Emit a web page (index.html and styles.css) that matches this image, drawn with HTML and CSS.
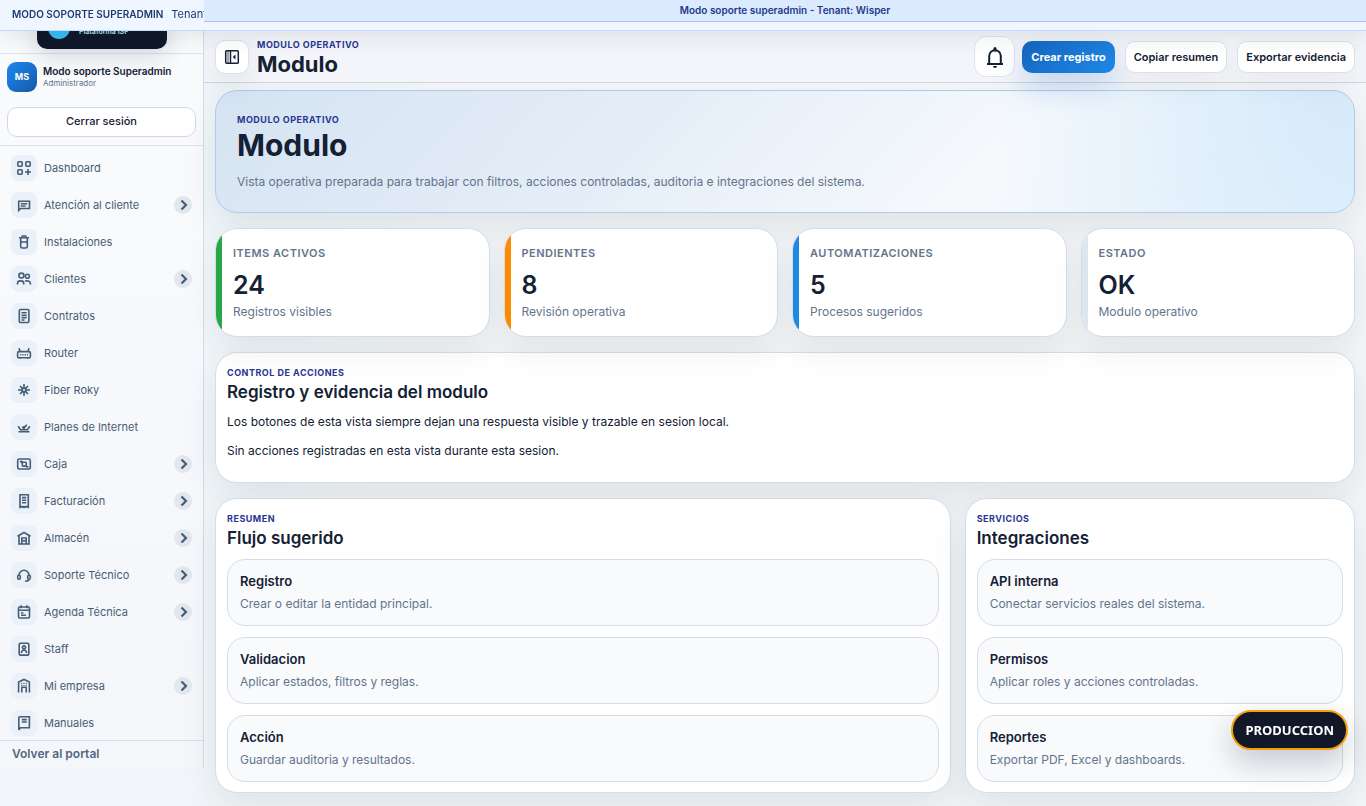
FILE: index.html
```html
<!DOCTYPE html>
<html lang="es">
<head>
<meta charset="utf-8">
<meta name="viewport" content="width=device-width, initial-scale=1">
<title>Modulo</title>
<link rel="stylesheet" href="styles.css">
</head>
<body>
<div class="support-bar"><strong>MODO SOPORTE SUPERADMIN</strong><span>Tenant: Wisper</span></div>
<div class="tenant-bar">Modo soporte superadmin - Tenant: Wisper</div>
<div class="app">
  <aside class="sidebar">
    <div class="brand">
      <div class="brand-card">
        <svg class="brand-mark" viewBox="0 0 22 22"><circle cx="11" cy="11" r="11" fill="#38bdf8" stroke="none"/><path d="M7 10a5 5 0 0 0 8 0" fill="none" stroke="#0f172a" stroke-width="2"/></svg>
        <span>Plataforma ISP</span>
      </div>
    </div>
    <div class="account">
      <div class="user">
        <span class="avatar">MS</span>
        <div class="user-text"><strong>Modo soporte Superadmin</strong><span>Administrador</span></div>
      </div>
      <button class="logout" type="button">Cerrar sesión</button>
    </div>
    <nav class="nav">
      <a href="#"><span class="tile"><svg viewBox="0 0 16 16"><rect x="1.8" y="1.8" width="4.4" height="4.4" rx="1"/><rect x="9.8" y="1.8" width="4.4" height="4.4" rx="1"/><rect x="1.8" y="9.8" width="4.4" height="4.4" rx="1"/><path d="M12 9v6M9 12h6"/></svg></span>Dashboard</a>
      <a href="#"><span class="tile"><svg viewBox="0 0 16 16"><path d="M2.700 13.500V4.200h10.800v7.300h-9z"/><path d="M4.800 6.700h6.600M4.800 9h4.800"/></svg></span>Atención al cliente<i class="chev"><svg viewBox="0 0 18 18"><path d="M7.5 4.500l4.500 4.500-4.500 4.500"/></svg></i></a>
      <a href="#"><span class="tile"><svg viewBox="0 0 16 16"><path d="M3 3.700h10M6.300 3.500V2h3.400v1.500M4.700 4v8.500q0 1.500 1.500 1.500h3.600q1.500 0 1.500-1.500V4M4.700 8h6.600"/></svg></span>Instalaciones</a>
      <a href="#"><span class="tile"><svg viewBox="0 0 16 16"><circle cx="5.4" cy="4.6" r="2.5"/><circle cx="11.4" cy="5.2" r="2"/><path d="M1.500 13.500v-1a2.600 2.600 0 0 1 2.600-2.600h1a2.600 2.600 0 0 1 2.600 2.600v1M9 10.200q.8-.5 2.300-.5 3.200.2 3.200 3.800"/></svg></span>Clientes<i class="chev"><svg viewBox="0 0 18 18"><path d="M7.5 4.500l4.500 4.500-4.500 4.500"/></svg></i></a>
      <a href="#"><span class="tile"><svg viewBox="0 0 16 16"><rect x="3.300" y="1.500" width="9.600" height="13" rx="1.200"/><path d="M5.500 4.800h5.200M5.500 7.200h5.200M5.500 9.600h5.200M5.500 12h3"/></svg></span>Contratos</a>
      <a href="#"><span class="tile"><svg viewBox="0 0 16 16"><rect x="1.600" y="6.600" width="12.800" height="6.200" rx="1.400"/><path d="M4 6.400L3 3.200M12 6.400l1-3.200M4.400 12.800v1M11.600 12.800v1"/><path d="M4 9.700h8" stroke-dasharray="1.300 1"/></svg></span>Router</a>
      <a href="#"><span class="tile"><svg viewBox="0 0 16 16"><circle cx="8" cy="8" r="1.900"/><path d="M8 2v4M8 10v4M2 8h4M10 8h4M4 4l2.600 2.600M12 4L9.400 6.600M4 12l2.600-2.600M12 12L9.400 9.400"/></svg></span>Fiber Roky</a>
      <a href="#"><span class="tile"><svg viewBox="0 0 16 16"><path d="M2.500 12.800h11M2.200 7.300L4.500 10.800h7L13.800 7.300M7 10.600l3.800-4.800M6 8.600l3.500-1.300"/></svg></span>Planes de Internet</a>
      <a href="#"><span class="tile"><svg viewBox="0 0 16 16"><rect x="1.700" y="3" width="12.600" height="10" rx="1.500"/><rect x="6.300" y="6.300" width="4" height="3.800" rx=".8"/><path d="M3.800 5.500h3M4.500 5.500l2 2M10 10l1.800 1.300M10.500 10.800h2"/></svg></span>Caja<i class="chev"><svg viewBox="0 0 18 18"><path d="M7.5 4.500l4.500 4.500-4.500 4.500"/></svg></i></a>
      <a href="#"><span class="tile"><svg viewBox="0 0 16 16"><path d="M4 14.300V1.700h8.300v12.600l-1.700-.8-1.300.8-1.200-.8-1.300.8-1.300-.8z"/><path d="M6 4.600h4.200M6 7.200h4.200M6 9.800h4.200"/></svg></span>Facturación<i class="chev"><svg viewBox="0 0 18 18"><path d="M7.5 4.500l4.500 4.500-4.500 4.500"/></svg></i></a>
      <a href="#"><span class="tile"><svg viewBox="0 0 16 16"><path d="M1.500 6.200L8 2.500l6.500 3.700M3 5.800V14h10V5.800"/><path d="M5.800 14V8h4.400v6M5.800 10.800h4.400"/></svg></span>Almacén<i class="chev"><svg viewBox="0 0 18 18"><path d="M7.5 4.500l4.500 4.500-4.500 4.500"/></svg></i></a>
      <a href="#"><span class="tile"><svg viewBox="0 0 16 16"><path d="M3 8.500a5 5.300 0 0 1 10 0"/><rect x="1.700" y="8.300" width="2.600" height="4" rx="1.200"/><rect x="11.700" y="8.300" width="2.600" height="4" rx="1.200"/><path d="M13.200 12.300q-.5 1.900-4.200 1.900"/></svg></span>Soporte Técnico<i class="chev"><svg viewBox="0 0 18 18"><path d="M7.5 4.500l4.500 4.500-4.500 4.500"/></svg></i></a>
      <a href="#"><span class="tile"><svg viewBox="0 0 16 16"><rect x="2.500" y="3" width="11" height="11" rx="1.200"/><path d="M2.500 6.300h11M5 1.300v3M11 1.300v3M5 9h2.400M5 11.200h5"/></svg></span>Agenda Técnica<i class="chev"><svg viewBox="0 0 18 18"><path d="M7.5 4.500l4.500 4.500-4.500 4.500"/></svg></i></a>
      <a href="#"><span class="tile"><svg viewBox="0 0 16 16"><rect x="3.200" y="2.300" width="9.600" height="11.800" rx="1.200"/><circle cx="8" cy="6.300" r="1.600"/><path d="M5.400 12q.3-3 2.600-3t2.600 3"/></svg></span>Staff</a>
      <a href="#"><span class="tile"><svg viewBox="0 0 16 16"><path d="M2.600 14.500V4L8 1.500 13.400 4v10.500"/><path d="M5.800 14.500V9.300h4.400v5.200"/><path d="M5 5.300h6.200M5 7.300h6.200" stroke-dasharray="1.300 1" stroke-width="1"/></svg></span>Mi empresa<i class="chev"><svg viewBox="0 0 18 18"><path d="M7.5 4.500l4.500 4.500-4.500 4.500"/></svg></i></a>
      <a href="#"><span class="tile"><svg viewBox="0 0 16 16"><path d="M2.800 15V2.800q0-1.100 1.100-1.100h9.500v11H4.300L2.800 15"/><path d="M5.800 4.600h5M5.800 7h5"/></svg></span>Manuales</a>
    </nav>
    <a class="back" href="#">Volver al portal</a>
  </aside>
  <div class="page">
    <header class="topbar">
      <button class="toggle" type="button" aria-label="Contraer menú"><svg viewBox="0 0 16 16"><rect x="1.700" y="1.700" width="12.600" height="12.600" rx="1"/><path d="M6.500 2v12"/><path d="M4 2v12" stroke-width=".8"/><path d="M11.500 5.500v5L8.700 8z" fill="currentColor" stroke="none"/></svg></button>
      <div class="titles"><p class="eyebrow">MODULO OPERATIVO</p><h1>Modulo</h1></div>
      <div class="actions">
        <button class="bell" type="button" aria-label="Notificaciones"><svg viewBox="0 0 24 24"><path d="M4 19h16M6.200 19v-8a5.800 5.800 0 0 1 11.600 0v8"/><path d="M12 3.500v1.500" stroke-width="3" stroke-linecap="round"/><path d="M10 21h4a2 2 0 0 1-4 0z" fill="currentColor" stroke="none"/></svg></button>
        <button class="btn primary" type="button">Crear registro</button>
        <button class="btn" type="button">Copiar resumen</button>
        <button class="btn" type="button">Exportar evidencia</button>
      </div>
    </header>
    <main class="content">
      <section class="hero">
        <p class="eyebrow">MODULO OPERATIVO</p>
        <h2>Modulo</h2>
        <p class="lead">Vista operativa preparada para trabajar con filtros, acciones controladas, auditoria e integraciones del sistema.</p>
      </section>
      <section class="stats">
        <article class="stat green"><h3>ITEMS ACTIVOS</h3><strong>24</strong><p>Registros visibles</p></article>
        <article class="stat orange"><h3>PENDIENTES</h3><strong>8</strong><p>Revisión operativa</p></article>
        <article class="stat blue"><h3>AUTOMATIZACIONES</h3><strong>5</strong><p>Procesos sugeridos</p></article>
        <article class="stat"><h3>ESTADO</h3><strong>OK</strong><p>Modulo operativo</p></article>
      </section>
      <section class="panel log">
        <p class="eyebrow">CONTROL DE ACCIONES</p>
        <h2>Registro y evidencia del modulo</h2>
        <p class="text">Los botones de esta vista siempre dejan una respuesta visible y trazable en sesion local.</p>
        <p class="text">Sin acciones registradas en esta vista durante esta sesion.</p>
      </section>
      <div class="columns">
        <section class="panel">
          <p class="eyebrow">RESUMEN</p>
          <h2>Flujo sugerido</h2>
          <div class="items">
            <article class="item"><h3>Registro</h3><p>Crear o editar la entidad principal.</p></article>
            <article class="item"><h3>Validacion</h3><p>Aplicar estados, filtros y reglas.</p></article>
            <article class="item"><h3>Acción</h3><p>Guardar auditoria y resultados.</p></article>
          </div>
        </section>
        <section class="panel">
          <p class="eyebrow">SERVICIOS</p>
          <h2>Integraciones</h2>
          <div class="items">
            <article class="item"><h3>API interna</h3><p>Conectar servicios reales del sistema.</p></article>
            <article class="item"><h3>Permisos</h3><p>Aplicar roles y acciones controladas.</p></article>
            <article class="item"><h3>Reportes</h3><p>Exportar PDF, Excel y dashboards.</p></article>
          </div>
        </section>
      </div>
    </main>
  </div>
</div>
<div class="env-badge">PRODUCCION</div>
</body>
</html>
```
FILE: styles.css
```css
* { box-sizing: border-box; }
body { margin: 0; background: #f4f5fa; color: #142033; font-family: Inter, "Liberation Sans", sans-serif; font-size: 12px; line-height: 20px; }
h1, h2, h3, p { margin: 0; }
a { color: inherit; text-decoration: none; }
button { font: inherit; color: inherit; cursor: pointer; }
svg { display: block; fill: none; stroke: currentColor; }

.support-bar { position: fixed; inset: 0 0 auto; z-index: 20; display: flex; gap: 8px; height: 31px; padding: 4px 12px; border-bottom: 1px solid #bfdbfe; background: #eff6ff; color: #1e3a6e; font-size: 11px; white-space: nowrap; box-shadow: 0 6px 22px rgba(15, 45, 42, .1); }
.support-bar strong { font-size: 10px; font-weight: 600; }
.tenant-bar { position: fixed; inset: 0 0 auto 204px; z-index: 21; height: 22px; border-bottom: 1px solid #a5c4f3; background: #dbeafe; color: #1e3a8a; font-size: 10px; font-weight: 600; text-align: center; }

.app { display: grid; grid-template-columns: 204px minmax(0, 1fr); min-height: 100vh; }
.sidebar { display: flex; flex-direction: column; height: calc(100vh - 38px); border-right: 1px solid #d3dce7; background: linear-gradient(#fafbfd, #f4f6fa); }
.brand { padding: 8px 36px 4px 37px; border-bottom: 1px solid #dce5ef; }
.brand-card { display: flex; align-items: end; gap: 9px; height: 41px; padding: 0 11px 10px; border-radius: 10px; background: #0f172a; color: #bae6fd; font-size: 7px; font-weight: 600; line-height: 14px; box-shadow: 0 8px 24px rgba(15, 23, 42, .14); }
.brand-mark { width: 22px; height: 22px; }
.account { display: flex; flex-direction: column; gap: 15px; padding: 8px 7px; border-bottom: 1px solid #dce5ef; }
.user { display: flex; align-items: center; gap: 6px; }
.avatar { display: grid; place-items: center; width: 30px; height: 30px; border-radius: 9px; background: linear-gradient(135deg, #1e88f0, #1459a8); color: #fff; font-size: 9px; font-weight: 700; }
.user-text { display: grid; line-height: 12px; }
.user-text strong { font-size: 10px; font-weight: 600; }
.user-text span { color: #64748b; font-size: 8px; }
.logout { height: 30px; padding: 0 0 2px; border: 1px solid #cfd9e6; border-radius: 10px; background: #fff; font-size: 11px; font-weight: 500; }
.nav { display: flex; flex: 1; flex-direction: column; gap: 1px; min-height: 0; padding: 4px 11px 0; overflow: hidden; }
.nav a { display: flex; flex: none; align-items: center; gap: 7px; height: 36px; color: #475c75; font-size: 11px; }
.tile { display: grid; place-items: center; width: 26px; height: 26px; border-radius: 8px; background: #eaf1f8; }
.tile svg { width: 16px; height: 16px; stroke-width: 1.6; }
.chev { width: 18px; height: 18px; margin-left: auto; border-radius: 50%; background: #e2e7ee; }
.chev svg { stroke-width: 2.2; }
.back { padding: 4px 12px 5px; border-top: 1px solid #d6e2ee; color: #526680; font-size: 12px; font-weight: 600; line-height: 18px; }

.page { min-width: 0; padding-top: 31px; background: linear-gradient(100deg, #eff5f9, #f4f6f9 20%); }
.topbar { position: relative; z-index: 2; display: flex; align-items: center; gap: 8px; height: 52px; padding: 0 11px; border-bottom: 1px solid #cbd5e3; background: #f4f5fa; }
.toggle { display: grid; place-items: center; width: 34px; height: 34px; padding: 0; border: 1px solid #d9e2ec; border-radius: 10px; background: #fff; box-shadow: 0 12px 28px rgba(15, 45, 42, .08); }
.toggle svg { width: 16px; height: 16px; stroke-width: 1.5; }
.titles { padding-top: 2px; }
.titles h1 { font-size: 22px; font-weight: 700; line-height: 26px; }
.eyebrow { color: #283593; font-size: 9px; font-weight: 700; line-height: 12px; letter-spacing: 0.5px; }
.actions { display: flex; align-items: center; gap: 10px; margin-left: auto; }
.bell { display: grid; place-items: center; width: 41px; height: 41px; margin-right: -3px; padding: 0; border: 1px solid #dfe4ea; border-radius: 12px; background: #fff; }
.bell svg { width: 24px; height: 24px; stroke-width: 2; }
.btn { height: 32px; padding: 0 8px; border: 1px solid #d9e2ec; border-radius: 10px; background: #fff; font-size: 11px; font-weight: 600; box-shadow: 0 14px 28px rgba(15, 45, 42, .05); }
.primary { border-color: transparent; background: linear-gradient(135deg, #1565c0, #1e88e5) border-box; color: #fff; font-weight: 700; box-shadow: 0 14px 28px rgba(21, 101, 192, .22); }

.content { display: grid; gap: 15px; padding: 7px 11px 13px; }
.hero { padding: 23px 21px 20px; border: 1px solid #aecbed; border-radius: 22px; background: radial-gradient(circle at 100% 0, #d6eafa, rgba(225, 240, 252, 0) 32%), linear-gradient(135deg, #d5e3f2, #e5eef8 38%, #f6f9fc 68%, #e8f3fd); box-shadow: 0 14px 36px rgba(15, 45, 42, .09); }
.hero h2 { margin: 3px 0 11px; font-size: 30px; font-weight: 700; line-height: 32px; }
.lead { color: #64748b; line-height: 20px; }
.stats { display: grid; grid-template-columns: repeat(4, 1fr); gap: 14px; }
.stat { position: relative; z-index: 1; overflow: hidden; padding: 16px 17px 14px; border: 1px solid #d3dde7; border-radius: 22px; background: #fff; box-shadow: 0 14px 32px rgba(15, 45, 42, .08); }
.stat::before { content: ""; position: absolute; inset: 0 auto 0 0; width: 6px; background: #dce6ef; }
.green::before { background: #28a745; }
.orange::before { background: #fb8c00; }
.blue::before { background: #1e88e5; }
.stat h3 { color: #64748b; font-size: 11px; font-weight: 600; line-height: 16px; letter-spacing: 0.5px; }
.stat strong { display: block; margin: 8px 0 1px; font-size: 25px; font-weight: 600; line-height: 32px; }
.stat p { color: #64748b; }
.panel { padding: 14px 11px 10px; border: 1px solid #d3dde7; border-radius: 22px; background: #fff; box-shadow: 0 14px 36px rgba(15, 45, 42, .09); }
.panel h2 { font-size: 17px; font-weight: 600; line-height: 26px; }
.panel.log { padding-bottom: 21px; }
.text { margin-top: 9px; }
.panel h2 + .text { margin-top: 7px; }
.columns { display: grid; grid-template-columns: minmax(0, 735fr) minmax(0, 390fr); gap: 14px; }
.items { display: grid; gap: 11px; margin-top: 8px; }
.item { padding: 11px 12px; border: 1px solid #d3dde7; border-radius: 18px; background: #f8fafc; }
.item h3 { margin-bottom: 3px; font-size: 13px; font-weight: 600; }
.item p { color: #64748b; }

.env-badge { position: fixed; right: 18px; bottom: 56px; z-index: 30; padding: 8px 12px; border: 2px solid #f59e0b; border-radius: 20px; background: #111827; color: #fff; font-family: "Noto Sans", sans-serif; font-size: 13px; font-weight: 700; box-shadow: 0 12px 30px rgba(15, 23, 42, .22); }
```
